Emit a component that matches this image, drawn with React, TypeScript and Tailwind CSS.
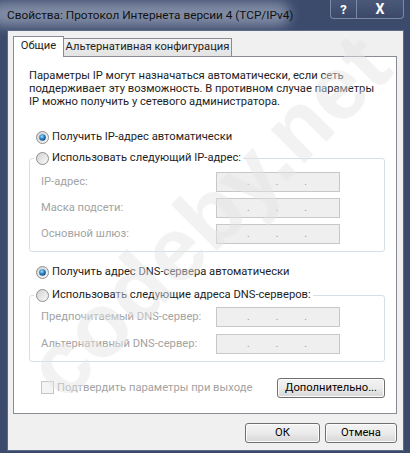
import React from "react";

const font = { fontFamily: 'Roboto, "Liberation Sans", sans-serif' };

function Radio({ checked }: { checked?: boolean }) {
  return (
    <svg width="13" height="13" viewBox="0 0 13 13" className="shrink-0">
      <defs>
        <linearGradient id="rgbg" x1="0" y1="0" x2="1" y2="1">
          <stop offset="0" stopColor="#d0d0d0" />
          <stop offset="1" stopColor="#fbfbfb" />
        </linearGradient>
        <radialGradient id="dot" cx="0.4" cy="0.35" r="0.7">
          <stop offset="0" stopColor="#a9e0ff" />
          <stop offset="0.5" stopColor="#2b85c8" />
          <stop offset="1" stopColor="#0b3f77" />
        </radialGradient>
      </defs>
      <circle cx="6.5" cy="6.5" r="6" fill="url(#rgbg)" stroke="#8e8f8f" strokeWidth="1" />
      {checked && <circle cx="6.5" cy="6.5" r="3.3" fill="url(#dot)" />}
    </svg>
  );
}

function IpBox() {
  return (
    <div className="w-[124px] h-[20px] border border-[#c8c8c8] bg-[#efefef] flex items-center pl-[30px] gap-[26px] text-[#9a9a9a] text-[10px] leading-none">
      <span>.</span>
      <span>.</span>
      <span>.</span>
    </div>
  );
}

function Row({ label }: { label: string }) {
  return (
    <div className="flex items-center h-[20px]">
      <span className="w-[186px] shrink-0 pl-[11px] whitespace-nowrap text-[#a3a3a3]">{label}</span>
      <IpBox />
    </div>
  );
}

function WinButton({ children, className }: { children: React.ReactNode; className?: string }) {
  return (
    <div
      className={
        "h-[20px] flex items-center justify-center rounded-[3px] border border-[#707070] text-black bg-gradient-to-b from-[#f3f3f3] via-[#ebebeb] to-[#d6d6d6] shadow-[inset_0_0_0_1px_#fcfcfc] " +
        (className || "")
      }
    >
      {children}
    </div>
  );
}

export default function App() {
  return (
    <div
      className="relative w-[410px] h-[453px] overflow-hidden bg-[#3c4a6c] flex flex-col text-[11.2px] text-[#1e1e1e]"
      style={font}
    >
      {/* Title bar */}
      <div className="h-[30px] flex shrink-0">
        <div className="relative pl-[7px] pt-[7px] h-full">
          <div className="absolute left-[-10px] top-[2px] w-[300px] h-[24px] rounded-full bg-[#8893ab] blur-[6px] opacity-90" />
          <span className="relative text-[11.8px] text-[#111] whitespace-nowrap">Свойства: Протокол Интернета версии 4 (TCP/IPv4)</span>
        </div>
        <div className="ml-auto mr-[6px] flex self-start">
          <div className="w-[27px] h-[19px] border border-[#7c88a6] border-t-0 rounded-bl-[4px] bg-gradient-to-b from-[#4a5879] to-[#3b4869] flex items-center justify-center text-white font-bold text-[13px] leading-none">?</div>
          <div className="w-[47px] h-[19px] border border-[#7c88a6] border-t-0 border-l-0 rounded-br-[4px] bg-gradient-to-b from-[#4a5879] to-[#3b4869] flex items-center justify-center text-white font-bold text-[14px] leading-none">X</div>
        </div>
      </div>

      {/* Client */}
      <div className="relative overflow-hidden flex-1 ml-[7px] mr-[6px] mb-[2px] bg-[#f0f0f0] border border-[#5d6a88] flex flex-col">
        {/* Tabs */}
        <div className="flex pl-[5px] pt-[4px] h-[25px] items-end">
          <div className="relative z-10 w-[51px] h-[21px] bg-white border border-[#898c95] border-b-0 flex items-center justify-center mb-[-1px] pb-[2px]">
            Общие
          </div>
          <div className="w-[168px] h-[18px] border border-[#898c95] border-l-0 border-b-0 bg-gradient-to-b from-[#f2f2f2] to-[#e3e3e3] flex items-center justify-center whitespace-nowrap">
            Альтернативная конфигурация
          </div>
        </div>
        {/* Panel */}
        <div className="ml-[5px] mr-[6px] h-[358px] bg-white border border-[#898c95] pl-[15px] pr-[11px] pt-[12px]">
          <div className="leading-[13px] whitespace-nowrap">
            <div>Параметры IP могут назначаться автоматически, если сеть</div>
            <div>поддерживает эту возможность. В противном случае параметры</div>
            <div>IP можно получить у сетевого администратора.</div>
          </div>

          <div className="mt-[21px] h-[16px] flex items-center gap-[3px] pl-[7px]">
            <Radio checked />
            <span>Получить IP-адрес автоматически</span>
          </div>

          <fieldset className="mt-[5px] border border-[#d5dfe5] rounded-[3px] pb-[7px]">
            <legend className="ml-[4px] px-[2px] h-[16px] flex items-center gap-[3px]">
              <Radio />
              <span>Использовать следующий IP-адрес:</span>
            </legend>
            <div className="mt-[6px] flex flex-col gap-[6px]">
              <Row label="IP-адрес:" />
              <Row label="Маска подсети:" />
              <Row label="Основной шлюз:" />
            </div>
          </fieldset>

          <div className="mt-[12px] h-[16px] flex items-center gap-[3px] pl-[7px]">
            <Radio checked />
            <span>Получить адрес DNS-сервера автоматически</span>
          </div>

          <fieldset className="mt-[7px] border border-[#d5dfe5] rounded-[3px] pb-[7px]">
            <legend className="ml-[4px] px-[2px] h-[16px] flex items-center gap-[3px]">
              <Radio />
              <span>Использовать следующие адреса DNS-серверов:</span>
            </legend>
            <div className="mt-[4px] flex flex-col gap-[7px]">
              <Row label="Предпочитаемый DNS-сервер:" />
              <Row label="Альтернативный DNS-сервер:" />
            </div>
          </fieldset>

          <div className="mt-[16px] flex items-center">
            <div className="pl-[12px] flex items-center gap-[3px] text-[#a3a3a3]">
              <div className="w-[13px] h-[13px] border border-[#c6c6c6] bg-[#f4f4f4]" />
              <span>Подтвердить параметры при выходе</span>
            </div>
            <WinButton className="ml-auto w-[108px]">Дополнительно...</WinButton>
          </div>
        </div>

        {/* Bottom buttons */}
        <div className="mt-[9px] flex justify-end gap-[5px] mr-[6px]">
          <WinButton className="w-[75px]">ОК</WinButton>
          <WinButton className="w-[72px]">Отмена</WinButton>
        </div>

        {/* Watermark */}
        <div
          className="pointer-events-none absolute left-[-60px] top-[140px] w-[520px] text-center -rotate-45 text-[90px] font-bold text-[#f2f2f2]/45 leading-none [text-shadow:0_0_1px_rgba(0,0,0,0.05)]"
          style={{ fontFamily: '"Liberation Sans", Arial, sans-serif' }}
        >
          codeby.net
        </div>
      </div>
    </div>
  );
}
